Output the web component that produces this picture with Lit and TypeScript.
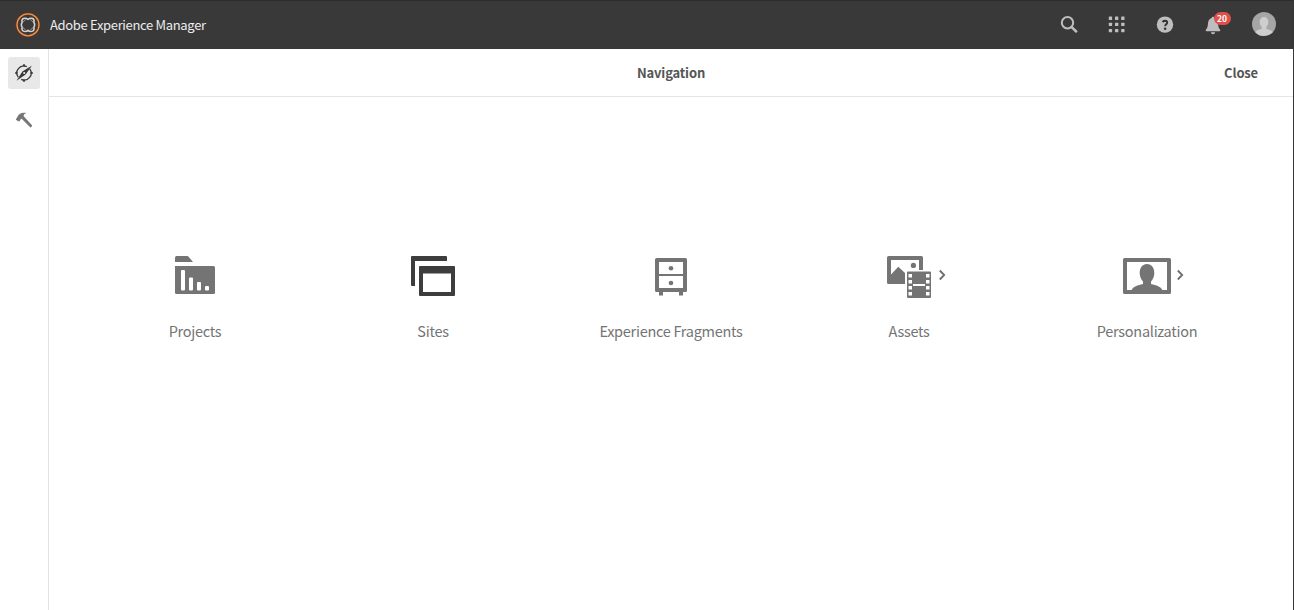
import { LitElement, html, css, svg } from "lit";
import { customElement, property } from "lit/decorators.js";

const icons = {
  projects: svg`<path d="M175 257.500q0-1.500 1.500-1.500H187q1 0 1.600.7L193 262H175z"/>
    <path fill-rule="evenodd" d="M175 266h38.500q1.500 0 1.500 1.500v25q0 1.500-1.500 1.500h-37q-1.500 0-1.500-1.500zM182 270q-1 0-1 1v18.500q0 1 1 1h2q1 0 1-1V271q0-1-1-1zm8 7.500q-1 0-1 1v11q0 1 1 1h2q1 0 1-1v-11q0-1-1-1zm8 4.500q-1 0-1 1v6.500q0 1 1 1h2q1 0 1-1V283q0-1-1-1zm8 4q-1 0-1 1v2.500q0 1 1 1h2q1 0 1-1V287q0-1-1-1z"/>`,
  sites: svg`<path d="M412 256h34q1 0 1 1v4h-32v25h-3q-1 0-1-1v-28q0-1 1-1z"/>
    <path fill-rule="evenodd" d="M420 266h34q1 0 1 1v28q0 1-1 1h-34q-1 0-1-1v-28q0-1 1-1zm3 7.500V292h28v-18.500z"/>`,
  fragments: svg`<path fill-rule="evenodd" d="M656.500 258h29q1.500 0 1.500 1.500v31q0 1.500-1.500 1.500H683v3.500h-4V292h-16v3.500h-4V292h-2.500q-1.500 0-1.500-1.500v-31q0-1.500 1.500-1.500zm2.500 4v12h24v-12zm0 14v12h24v-12z"/>
    <circle cx="671" cy="268.300" r="2.300"/><circle cx="671" cy="283" r="2.300"/>`,
  assets: svg`<path d="M888.500 256h33q1.500 0 1.500 1.500V270h-4v-10h-28v14.500l7.300-7.800 6.700 6.300V284h-16.500q-1.500 0-1.500-1.500v-25q0-1.500 1.500-1.500z"/>
    <circle cx="913.400" cy="265.400" r="2.600"/>
    <path fill-rule="evenodd" d="M908 271.500h22q1 0 1 1V297q0 1-1 1h-22q-1 0-1-1v-24.500q0-1 1-1zM908.500 274v3.500h3.500V274zm0 6v3.500h3.500V280zm0 6v3.500h3.500V286zm0 6v3.500h3.500V292zM926 274v3.500h3.500V274zm0 6v3.500h3.500V280zm0 6v3.500h3.500V286zm0 6v3.500h3.500V292zM913 284v2h12v-2z"/>`,
  personalization: svg`<path fill-rule="evenodd" d="M1124.500 258h45q1.500 0 1.500 1.500v33q0 1.500-1.500 1.500h-45q-1.500 0-1.500-1.500v-33q0-1.500 1.500-1.500zM1127 262v28h4.800c1-3.400 6-4.600 11.200-6v-2.500c-2-2-3.300-5-3.300-8.500 0-5.500 2.800-9 7.300-9s7.300 3.500 7.300 9c0 3.500-1.300 6.500-3.300 8.500v2.500c5.200 1.400 10.200 2.600 11.200 6h4.800v-28z"/>`,
};

const tiles = [
  { label: "Projects", icon: icons.projects, view: "171 252 48 48" },
  { label: "Sites", icon: icons.sites, view: "409 252 48 48", active: true },
  { label: "Experience Fragments", icon: icons.fragments, view: "647 252 48 48" },
  { label: "Assets", icon: icons.assets, view: "885 252 48 48", more: true },
  { label: "Personalization", icon: icons.personalization, view: "1123 252 48 48", more: true },
];

@customElement("nav-tile")
class NavTile extends LitElement {
  @property({ attribute: false }) tile: any;

  static styles = css`
    :host { display: flex; flex-direction: column; align-items: center; color: #747474; }
    .figure { position: relative; width: 48px; height: 48px; }
    .icon { display: block; fill: currentColor; }
    .active { color: #3d3d3d; }
    .more { position: absolute; left: 53px; top: 17px; fill: none; stroke: #6e6e6e; stroke-width: 1.8; }
    .label { margin-top: 19px; font-size: 14.5px; line-height: 24px; letter-spacing: -0.28px; white-space: nowrap; }
  `;

  render() {
    const t = this.tile;
    return html`<div class="figure ${t.active ? "active" : ""}">
        <svg class="icon" width="48" height="48" viewBox=${t.view}>${t.icon}</svg>
        ${t.more ? html`<svg class="more" width="8" height="12" viewBox="0 0 8 12"><path d="M1.800 1.500 6.200 6 1.800 10.500"/></svg>` : ""}
      </div>
      <div class="label">${t.label}</div>`;
  }
}

@customElement("app-root")
class AppRoot extends LitElement {
  static styles = css`
    :host {
      display: flex; flex-direction: column; box-sizing: border-box; height: 610px;
      border-right: 1px solid #353535; background: #fff; overflow: hidden;
      font-family: "Noto Sans CJK SC", "Noto Sans", sans-serif;
    }
    svg { display: block; }
    .header { display: flex; align-items: center; height: 49px; flex: none; box-sizing: border-box; background: #393939; border-top: 1px solid #2c2c2c; padding: 0 17px 0 15px; }
    .title { margin-left: 9px; color: #ececec; font-size: 13px; line-height: 20px; letter-spacing: -0.33px; white-space: nowrap; }
    .tools { display: flex; align-items: center; margin: -2px 0 0 auto; gap: 24px; color: #bebebe; }
    .tool { position: relative; width: 24px; height: 24px; }
    .avatar { margin-left: 3px; }
    .badge { position: absolute; left: 12.5px; top: 0; width: 17px; height: 13px; border-radius: 6.5px; background: #e0504a; color: #fff; font-size: 8.5px; line-height: 13px; font-weight: 700; text-align: center; }
    .body { display: flex; flex: 1; min-height: 0; }
    .rail { width: 48px; border-right: 1px solid #e3e3e3; padding-top: 8px; display: flex; flex-direction: column; align-items: center; gap: 15px; }
    .rail-item { width: 32px; height: 32px; display: grid; place-items: center; border-radius: 3px; color: #777; }
    .selected { background: #e8e8e8; color: #383838; }
    .main { flex: 1; display: flex; flex-direction: column; }
    .bar { display: grid; grid-template-columns: 1fr auto 1fr; align-items: center; height: 47px; border-bottom: 1px solid #e6e6e6; padding: 0 35px; color: #555; font-size: 13px; font-weight: 700; line-height: 20px; letter-spacing: -0.15px; }
    .heading { grid-column: 2; }
    .close { justify-self: end; }
    .tiles { display: grid; grid-template-columns: repeat(5, 238px); justify-content: center; padding-top: 155px; }
  `;

  render() {
    const dots = [0, 6.2, 12.4];
    return html`
      <header class="header">
        <svg width="26" height="26" viewBox="0 0 26 26" fill="none">
          <circle cx="12.800" cy="12.800" r="11" stroke="#6b330f" stroke-width="3"/>
          <circle cx="13" cy="12.800" r="11" stroke="#dc9a69" stroke-width="1.300"/>
          <path d="M8.300 6.500Q10.800 5.600 13 7.300 15.200 5.600 17.700 6.500 19.800 7.800 18.800 10.300 20.600 12.800 18.800 15.300 19.800 17.800 17.700 19.100 15.200 20 13 18.300 10.800 20 8.300 19.100 6.200 17.800 7.200 15.300 5.400 12.800 7.200 10.300 6.200 7.800 8.300 6.500z" stroke="#d8d2cf" stroke-width="1.500"/>
          <path d="M7.200 10.300Q9.500 9.500 10.500 7.500M18.800 10.300Q16.500 9.500 15.500 7.500M7.200 15.300Q9.500 16.100 10.500 18.100M18.800 15.300Q16.500 16.100 15.500 18.100" stroke="#b5afac" stroke-width=".8"/>
        </svg>
        <span class="title">Adobe Experience Manager</span>
        <div class="tools">
          <div class="tool"><svg width="24" height="24" viewBox="0 0 24 24" fill="none" stroke="currentColor"><circle cx="10.500" cy="10.800" r="5.700" stroke-width="2"/><path d="M14.700 15.100 19.200 19.500" stroke-width="2.500" stroke-linecap="round"/></svg></div>
          <div class="tool"><svg width="24" height="24" viewBox="0 0 24 24" fill="currentColor">${dots.map((y) => dots.map((x) => svg`<rect x=${3.8 + x} y=${4.6 + y} width="3.300" height="3.300" rx=".5"/>`))}</svg></div>
          <div class="tool"><svg width="24" height="24" viewBox="0 0 24 24"><circle cx="12" cy="12.600" r="8.200" fill="currentColor"/><path d="M9.500 10Q10.700 8.800 12.200 8.800 14.300 8.900 14.200 10.600 14.200 11.600 13 12.500 12.100 13.200 12.200 14.200" fill="none" stroke="#333" stroke-width="2"/><circle cx="12.100" cy="16.700" r="1.250" fill="#333"/></svg></div>
          <div class="tool"><svg width="24" height="24" viewBox="0 0 24 24" fill="currentColor"><path d="M12 4.700c.8 0 1.300.5 1.300 1.300 2.500.7 3.500 2.700 3.700 5.200.2 3.300.8 5 2 6.200.5.500.3 1.800-.5 1.800h-13c-.8 0-1-1.300-.5-1.800 1.200-1.200 1.800-2.900 2-6.200.2-2.500 1.200-4.500 3.700-5.200 0-.8.500-1.300 1.300-1.300zM10 20.200h4c0 1.200-.8 2-2 2s-2-.8-2-2z"/></svg><span class="badge">20</span></div>
          <svg class="avatar" width="24" height="24" viewBox="0 0 24 24"><defs><clipPath id="round"><circle cx="12" cy="12" r="12"/></clipPath></defs><g clip-path="url(#round)"><path d="M0 0h24v24H0z" fill="#a6a6a6"/><path d="M12 5c2.800 0 4.300 2 4.300 5 0 2.200-.8 4-2 5v2c3.500.8 5.700 1.500 6.700 3.500V24H3v-3.500c1-2 3.200-2.700 6.700-3.500v-2c-1.200-1-2-2.800-2-5 0-3 1.500-5 4.300-5z" fill="#cecece"/></g></svg>
        </div>
      </header>
      <div class="body">
        <nav class="rail">
          <div class="rail-item selected"><svg width="20" height="20" viewBox="0 0 20 20"><path d="M4.300 14.200A7 7 0 0 1 12.800 3.600M15.700 5.800A7 7 0 0 1 7.200 16.400" fill="none" stroke="currentColor" stroke-width="1.300"/><path d="M10 1.300V3.500M10 16.500v2.200M1.300 10H3.500M16.500 10h2.200" stroke="currentColor" stroke-width="1.800"/><path fill="currentColor" fill-rule="evenodd" d="M18 2.500 11.600 11.600 2.500 17.700 8.400 8.400zM10.200 8.900a1.100 1.100 0 1 0 0 2.200 1.100 1.100 0 0 0 0-2.200z"/></svg></div>
          <div class="rail-item"><svg width="18" height="18" viewBox="0 0 18 18" fill="currentColor"><path d="M1 8.200 2 6.500C3.500 3 6.500 1 11.500 2 9.500 2.500 8.500 3.500 8.700 5.200L17 14.300Q17.300 14.800 16.900 15.200L15.900 16.200Q15.400 16.600 14.900 16.100L6.700 7.700 5.800 8Q5.300 9.600 4.500 10.300 4 10.700 3.500 10.200L1.200 9Q.7 8.600 1 8.200z"/></svg></div>
        </nav>
        <main class="main">
          <div class="bar"><span class="heading">Navigation</span><span class="close">Close</span></div>
          <div class="tiles">${tiles.map((t) => html`<nav-tile .tile=${t}></nav-tile>`)}</div>
        </main>
      </div>`;
  }
}
